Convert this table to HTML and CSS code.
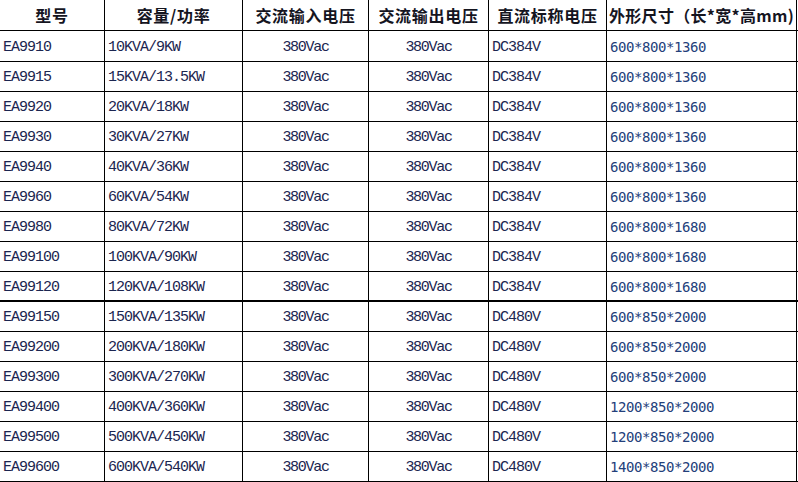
FILE: index.html
```html
<!DOCTYPE html>
<html lang="zh-CN">
<head>
<meta charset="utf-8">
<title>EA99 系列参数表</title>
<link rel="stylesheet" href="styles.css">
</head>
<body>
<div class="table">
  <div class="row head">
    <div class="c">型号</div>
    <div class="c">容量/功率</div>
    <div class="c">交流输入电压</div>
    <div class="c">交流输出电压</div>
    <div class="c">直流标称电压</div>
    <div class="c tight">外形尺寸（长*宽*高mm)</div>
  </div>
  <div class="row first"><div class="c l">EA9910</div><div class="c l">10KVA/9KW</div><div class="c m">380Vac</div><div class="c m">380Vac</div><div class="c l">DC384V</div><div class="c s">600*800*1360</div></div>
  <div class="row"><div class="c l">EA9915</div><div class="c l">15KVA/13.5KW</div><div class="c m">380Vac</div><div class="c m">380Vac</div><div class="c l">DC384V</div><div class="c s">600*800*1360</div></div>
  <div class="row"><div class="c l">EA9920</div><div class="c l">20KVA/18KW</div><div class="c m">380Vac</div><div class="c m">380Vac</div><div class="c l">DC384V</div><div class="c s">600*800*1360</div></div>
  <div class="row"><div class="c l">EA9930</div><div class="c l">30KVA/27KW</div><div class="c m">380Vac</div><div class="c m">380Vac</div><div class="c l">DC384V</div><div class="c s">600*800*1360</div></div>
  <div class="row"><div class="c l">EA9940</div><div class="c l">40KVA/36KW</div><div class="c m">380Vac</div><div class="c m">380Vac</div><div class="c l">DC384V</div><div class="c s">600*800*1360</div></div>
  <div class="row"><div class="c l">EA9960</div><div class="c l">60KVA/54KW</div><div class="c m">380Vac</div><div class="c m">380Vac</div><div class="c l">DC384V</div><div class="c s">600*800*1360</div></div>
  <div class="row"><div class="c l">EA9980</div><div class="c l">80KVA/72KW</div><div class="c m">380Vac</div><div class="c m">380Vac</div><div class="c l">DC384V</div><div class="c s">600*800*1680</div></div>
  <div class="row"><div class="c l">EA99100</div><div class="c l">100KVA/90KW</div><div class="c m">380Vac</div><div class="c m">380Vac</div><div class="c l">DC384V</div><div class="c s">600*800*1680</div></div>
  <div class="row thick"><div class="c l">EA99120</div><div class="c l">120KVA/108KW</div><div class="c m">380Vac</div><div class="c m">380Vac</div><div class="c l">DC384V</div><div class="c s">600*800*1680</div></div>
  <div class="row"><div class="c l">EA99150</div><div class="c l">150KVA/135KW</div><div class="c m">380Vac</div><div class="c m">380Vac</div><div class="c l">DC480V</div><div class="c s">600*850*2000</div></div>
  <div class="row"><div class="c l">EA99200</div><div class="c l">200KVA/180KW</div><div class="c m">380Vac</div><div class="c m">380Vac</div><div class="c l">DC480V</div><div class="c s">600*850*2000</div></div>
  <div class="row"><div class="c l">EA99300</div><div class="c l">300KVA/270KW</div><div class="c m">380Vac</div><div class="c m">380Vac</div><div class="c l">DC480V</div><div class="c s">600*850*2000</div></div>
  <div class="row"><div class="c l">EA99400</div><div class="c l">400KVA/360KW</div><div class="c m">380Vac</div><div class="c m">380Vac</div><div class="c l">DC480V</div><div class="c s">1200*850*2000</div></div>
  <div class="row"><div class="c l">EA99500</div><div class="c l">500KVA/450KW</div><div class="c m">380Vac</div><div class="c m">380Vac</div><div class="c l">DC480V</div><div class="c s">1200*850*2000</div></div>
  <div class="row"><div class="c l">EA99600</div><div class="c l">600KVA/540KW</div><div class="c m">380Vac</div><div class="c m">380Vac</div><div class="c l">DC480V</div><div class="c s">1400*850*2000</div></div>
</div>
</body>
</html>
```
FILE: styles.css
```css
html, body {
  margin: 0;
  padding: 0;
  background: #ffffff;
}
.table {
  width: 798px;
  display: flex;
  flex-direction: column;
}
.row {
  display: grid;
  grid-template-columns: 105px 138px 126px 120px 118px 190px;
  height: 30px;
  box-sizing: border-box;
  border-bottom: 1px solid #000;
}
.row.head {
  height: 31px;
}
.row.first {
  height: 31px;
}
.row.thick {
  border-bottom-width: 2px;
}
.c {
  box-sizing: border-box;
  border-right: 1px solid #000;
  display: flex;
  align-items: center;
  white-space: nowrap;
  overflow: visible;
  line-height: 16px;
  color: #1b2550;
}
.head .c {
  justify-content: center;
  font-family: "Noto Sans CJK SC", sans-serif;
  font-weight: 700;
  font-size: 16px;
  letter-spacing: 0.7px;
  color: #15151f;
}
.head .c.tight {
  letter-spacing: 0.3px;
}
.l {
  padding-left: 3px;
  padding-top: 3px;
  font-family: "Liberation Mono", monospace;
  font-size: 15px;
  letter-spacing: -1px;
  font-weight: 400;
}
.m {
  justify-content: center;
  padding-top: 3px;
  font-family: "Liberation Mono", monospace;
  font-size: 15px;
  letter-spacing: -1.3px;
}
.s {
  padding-left: 3px;
  padding-top: 1px;
  font-family: "DejaVu Sans Mono", monospace;
  font-size: 14px;
  letter-spacing: -0.43px;
  color: #23407a;
}
```
